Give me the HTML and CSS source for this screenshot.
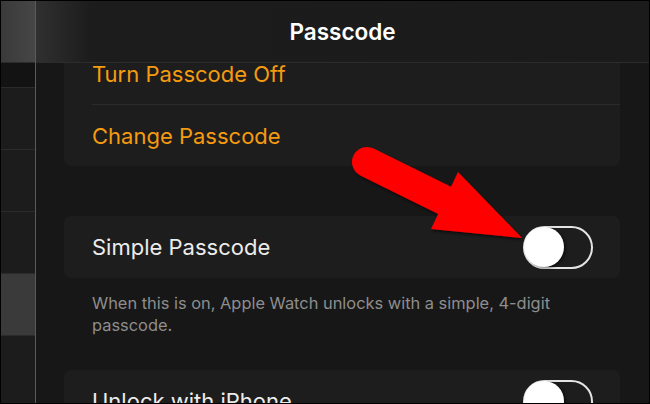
FILE: index.html
```html
<!DOCTYPE html>
<html>
<head>
<meta charset="utf-8">
<link rel="stylesheet" href="styles.css">
</head>
<body>
<div class="app">
  <aside class="sidebar">
    <div class="side-head"></div>
    <div class="side-partial"></div>
    <div class="side-item"></div>
    <div class="side-item"></div>
    <div class="side-item"></div>
    <div class="side-item active"></div>
    <div class="side-item short"></div>
  </aside>
  <main class="main">
    <header class="head"><h1 class="title">Passcode</h1></header>
    <div class="viewport">
      <div class="scroll">
        <section class="card top">
          <div class="row partial"><span class="link">Turn Passcode Off</span></div>
          <div class="row sep"><span class="link">Change Passcode</span></div>
        </section>
        <section class="card gap">
          <div class="row"><span class="label">Simple Passcode</span><span class="toggle"><span class="knob"></span></span></div>
        </section>
        <p class="footnote">When this is on, Apple Watch unlocks with a simple, 4-digit passcode.</p>
        <section class="card">
          <div class="row"><span class="label">Unlock with iPhone</span><span class="toggle"><span class="knob"></span></span></div>
        </section>
      </div>
    </div>
  </main>
  <svg class="arrow" width="650" height="404" viewBox="0 0 650 404">
    <defs>
      <filter id="sh" x="-20%" y="-20%" width="140%" height="140%">
        <feDropShadow dx="1" dy="2" stdDeviation="1.5" flood-color="#000" flood-opacity="0.6"/>
      </filter>
    </defs>
    <g filter="url(#sh)" fill="#ff0000">
      <line x1="367" y1="162" x2="452" y2="204" stroke="#ff0000" stroke-width="30" stroke-linecap="round"/>
      <polygon points="458,172 522,238 431,229"/>
    </g>
  </svg>
</div>
</body>
</html>
```

FILE: styles.css
```css
* { box-sizing: border-box; }
html, body { margin: 0; padding: 0; background: #000; }
body { font-family: Inter, "Noto Sans", "Liberation Sans", sans-serif; }

.app {
  position: relative;
  width: 650px;
  height: 404px;
  border: 1px solid #000;
  display: flex;
  overflow: hidden;
  background: #171717;
}

.sidebar {
  width: 35px;
  flex: none;
  display: flex;
  flex-direction: column;
  background: #1c1c1c;
  border-right: 1px solid #5a5a5a;
}
.side-head {
  height: 62px;
  flex: none;
  background: linear-gradient(90deg, #3a3a3a, #464646);
  border-bottom: 1px solid #2c2c2c;
}
.side-partial { height: 24px; flex: none; background: #131313; }
.side-item { height: 62px; flex: none; border-top: 1px solid #2b2b2b; background: #1c1c1c; }
.side-item.active { background: #3a3a3a; }
.side-item.short { height: 52px; }

.main {
  flex: 1;
  display: flex;
  flex-direction: column;
  min-width: 0;
}
.head {
  height: 62px;
  flex: none;
  display: flex;
  align-items: center;
  justify-content: center;
  background: linear-gradient(90deg, #303030, #1c1c1c 55px, #1b1b1b);
  border-bottom: 1px solid #2c2c2c;
  padding-bottom: 1px;
}
.title {
  margin: 0;
  color: #fff;
  font-size: 22.5px;
  font-weight: 600;
}

.viewport { flex: 1; overflow: hidden; }
.scroll { padding: 0 29px 0 28px; }

.card {
  background: #1d1d1d;
  border-radius: 7px;
}
.card.top { border-radius: 0 0 7px 7px; }
.card.gap { margin-top: 50px; }

.row {
  height: 62px;
  display: flex;
  align-items: center;
  justify-content: space-between;
  margin-left: 28px;
  padding-right: 27px;
}
.row.partial { height: 41px; align-items: flex-start; padding-top: 0; }
.row.partial .link { line-height: 22px; }
.row.sep { border-top: 1px solid #2b2b2b; height: 62px; }

.link { color: #f59b0f; font-size: 22px; }
.label { color: #ececec; font-size: 22px; }

.footnote {
  margin: 14px 0 34px 28px;
  color: #8e8e8e;
  font-size: 16.4px;
  line-height: 22px;
  width: 520px;
}

.toggle {
  width: 70px;
  height: 43px;
  border: 2px solid #e4e4e4;
  border-radius: 22px;
  display: flex;
  align-items: center;
  background: #1d1d1d;
}
.knob {
  width: 40px;
  height: 40px;
  margin-left: -1px;
  border-radius: 50%;
  background: radial-gradient(circle at 40% 45%, #fff 70%, #e8e8e8 85%, #9a9a9a 100%);
  box-shadow: 2px 1px 3px rgba(0,0,0,0.5);
}

.arrow { position: absolute; left: -1px; top: -1px; pointer-events: none; }
```
